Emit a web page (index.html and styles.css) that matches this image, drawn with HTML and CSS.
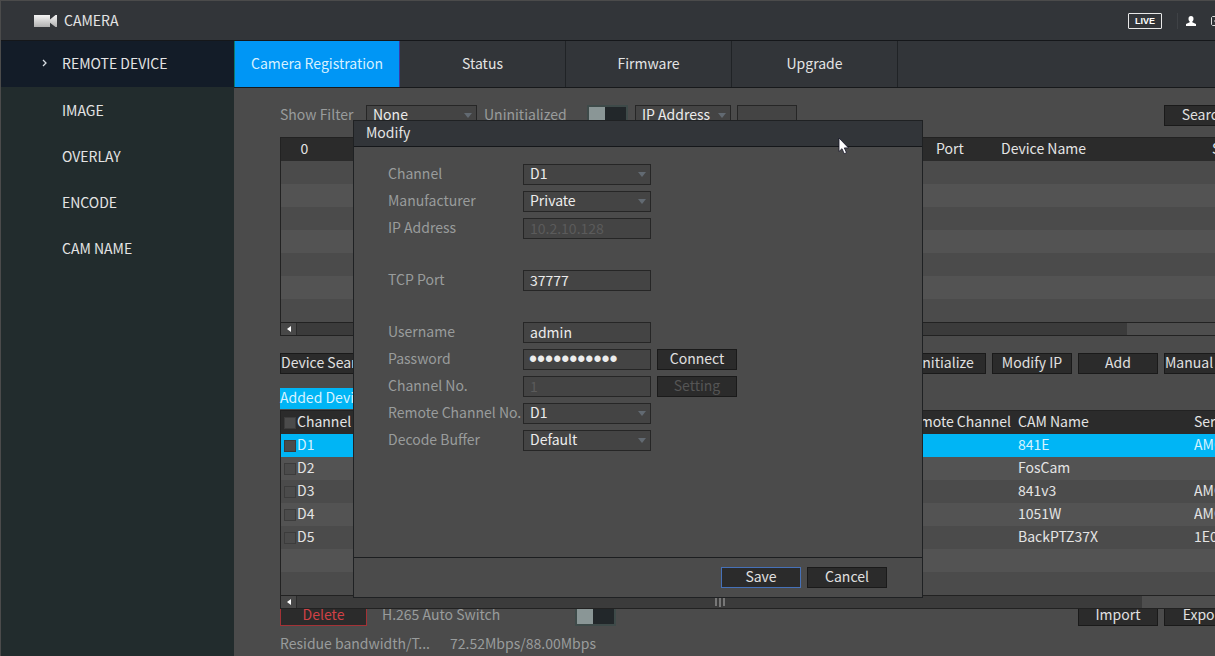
FILE: index.html
```html
<!DOCTYPE html>
<html lang="en">
<head>
<meta charset="utf-8">
<title>Camera - Remote Device</title>
<link rel="stylesheet" href="styles.css">
</head>
<body>
<div class="app">
  <header class="topbar">
    <svg class="camera-icon" viewBox="0 0 24 14" aria-hidden="true">
      <defs><linearGradient id="cam" x1="0" y1="0" x2="0" y2="1"><stop offset="0" stop-color="#f4f4f4"/><stop offset="1" stop-color="#b0b0b0"/></linearGradient></defs>
      <path fill="url(#cam)" d="M1 1h16v4.500L22.500 1H24v12h-1.500L17 8.800V13H1z"/>
    </svg>
    <h1 class="app-title">CAMERA</h1>
    <div class="top-actions">
      <button class="live" type="button">LIVE</button>
      <span class="divider"></span>
      <button class="icon-button" type="button" aria-label="User">
        <svg viewBox="0 0 10 10"><path fill="#fff" d="M5 0a2.500 2.700 0 0 1 2.500 2.700C7.500 4.100 7 5 6.300 5.500v.8L10 8v2H0V8l3.700-1.700v-.8C3 5 2.500 4.100 2.500 2.700A2.500 2.700 0 0 1 5 0z"/></svg>
      </button>
      <button class="icon-button" type="button" aria-label="Log out">
        <svg viewBox="0 0 10 10"><path fill="none" stroke="#ddd" d="M8 2.500V.500H1.500L.500 1.500v7l1 1H8v-2M3 5h6M7 3l2 2-2 2"/></svg>
      </button>
    </div>
  </header>

  <div class="body">
    <nav class="sidebar">
      <a class="side-item active" href="#remote"><svg class="chevron" viewBox="0 0 6 8" aria-hidden="true"><path fill="none" stroke="#d8dde2" stroke-width="1.300" d="M1 1l3 3-3 3"/></svg>REMOTE DEVICE</a>
      <a class="side-item" href="#image">IMAGE</a>
      <a class="side-item" href="#overlay">OVERLAY</a>
      <a class="side-item" href="#encode">ENCODE</a>
      <a class="side-item" href="#camname">CAM NAME</a>
    </nav>

    <main class="main">
      <nav class="tabs">
        <a class="tab active" href="#registration">Camera Registration</a>
        <a class="tab" href="#status">Status</a>
        <a class="tab" href="#firmware">Firmware</a>
        <a class="tab" href="#upgrade">Upgrade</a>
      </nav>

      <div class="content">
        <div class="filter-row">
          <label class="filter-label" for="filter">Show Filter</label>
          <span class="select filter-select"><select id="filter"><option>None</option></select></span>
          <label class="uninit-label" for="uninit">Uninitialized</label>
          <input class="toggle" type="checkbox" id="uninit">
          <span class="select address-select"><select aria-label="Search by"><option>IP Address</option></select></span>
          <input class="field search-field" type="text" aria-label="Search value">
          <button class="button push" type="button">Search</button>
        </div>

        <div class="grid-box">
          <table class="grid">
            <colgroup><col class="col-count"><col><col class="col-port"><col class="col-device"><col class="col-edge"></colgroup>
            <thead><tr><th class="center">0</th><th></th><th>Port</th><th>Device Name</th><th>S</th></tr></thead>
            <tbody>
              <tr><td colspan="5"></td></tr>
              <tr><td colspan="5"></td></tr>
              <tr><td colspan="5"></td></tr>
              <tr><td colspan="5"></td></tr>
              <tr><td colspan="5"></td></tr>
              <tr><td colspan="5"></td></tr>
              <tr><td colspan="5"></td></tr>
            </tbody>
          </table>
          <div class="scrollbar"><span class="arrow"></span><span class="thumb short"></span></div>
        </div>

        <div class="button-row">
          <button class="button wide" type="button">Device Search</button>
          <button class="button push" type="button">Initialize</button>
          <button class="button" type="button">Modify IP</button>
          <button class="button" type="button">Add</button>
          <button class="button tight" type="button">Manual Add</button>
        </div>

        <h2 class="added">Added Device</h2>
        <div class="grid-box">
          <table class="grid">
            <colgroup><col class="col-channel"><col><col class="col-remote"><col class="col-cam"><col class="col-serial"></colgroup>
            <thead><tr><th><label class="pick"><input type="checkbox">Channel</label></th><th></th><th class="remote">Remote Channel</th><th>CAM Name</th><th>Serial No.</th></tr></thead>
            <tbody>
              <tr class="selected"><td><label class="pick"><input type="checkbox">D1</label></td><td></td><td></td><td>841E</td><td>AMC0</td></tr>
              <tr><td><label class="pick"><input type="checkbox">D2</label></td><td></td><td></td><td>FosCam</td><td></td></tr>
              <tr><td><label class="pick"><input type="checkbox">D3</label></td><td></td><td></td><td>841v3</td><td>AMC0</td></tr>
              <tr><td><label class="pick"><input type="checkbox">D4</label></td><td></td><td></td><td>1051W</td><td>AMC0</td></tr>
              <tr><td><label class="pick"><input type="checkbox">D5</label></td><td></td><td></td><td>BackPTZ37X</td><td>1E0</td></tr>
              <tr><td colspan="5"></td></tr>
              <tr><td colspan="5"></td></tr>
            </tbody>
          </table>
          <div class="scrollbar"><span class="arrow"></span><span class="thumb"><i></i><i class="long"></i><i></i></span></div>
        </div>

        <div class="bottom-row">
          <button class="button delete" type="button">Delete</button>
          <label class="switch-label" for="h265">H.265 Auto Switch</label>
          <input class="toggle" type="checkbox" id="h265">
          <button class="button push" type="button">Import</button>
          <button class="button" type="button">Export</button>
        </div>
        <p class="bandwidth"><span class="bandwidth-name">Residue bandwidth/T...</span><span>72.52Mbps/88.00Mbps</span></p>
      </div>
    </main>
  </div>
</div>

<section class="dialog" role="dialog" aria-labelledby="dialog-title">
  <h2 class="dialog-title" id="dialog-title">Modify</h2>
  <form class="dialog-form" id="modify">
    <div class="group">
      <div class="row"><label for="channel">Channel</label><span class="select"><select id="channel"><option>D1</option></select></span></div>
      <div class="row"><label for="maker">Manufacturer</label><span class="select"><select id="maker"><option>Private</option></select></span></div>
      <div class="row"><label for="ip">IP Address</label><input class="field" id="ip" type="text" value="10.2.10.128" disabled></div>
    </div>
    <div class="group">
      <div class="row"><label for="port">TCP Port</label><input class="field" id="port" type="text" value="37777"></div>
    </div>
    <div class="group">
      <div class="row"><label for="user">Username</label><input class="field" id="user" type="text" value="admin"></div>
      <div class="row"><label for="pass">Password</label><input class="field password" id="pass" type="password" value="12345678901"><button class="button" type="button">Connect</button></div>
      <div class="row"><label for="number">Channel No.</label><input class="field" id="number" type="text" value="1" disabled><button class="button" type="button" disabled>Setting</button></div>
      <div class="row"><label for="remote-no">Remote Channel No.</label><span class="select"><select id="remote-no"><option>D1</option></select></span></div>
      <div class="row"><label for="buffer">Decode Buffer</label><span class="select"><select id="buffer"><option>Default</option></select></span></div>
    </div>
  </form>
  <div class="dialog-footer">
    <button class="button primary" type="submit" form="modify">Save</button>
    <button class="button" type="button">Cancel</button>
  </div>
</section>

<svg class="cursor" viewBox="0 0 11 18" aria-hidden="true"><path fill="#fff" stroke="#17172a" stroke-width=".8" d="M1 1v13.500l3-2.800 2.200 5 2.300-1-2.200-4.800H10.500z"/></svg>
</body>
</html>
```
FILE: styles.css
```css
* { box-sizing: border-box; }

body {
  margin: 0;
  overflow: hidden;
  background: #4b4b4b;
  color: #e4e4e4;
  font: 14px/20px "Noto Sans CJK SC", "Open Sans", sans-serif;
}

button, input, select { font: inherit; color: inherit; margin: 0; }
a { color: inherit; text-decoration: none; }
h1, h2, p { margin: 0; font-size: inherit; font-weight: 400; }

.app {
  display: flex;
  flex-direction: column;
  min-height: 100vh;
  border-top: 1px solid #4b4b4b;
  border-left: 1px solid #4b4b4b;
}

.topbar {
  display: flex;
  align-items: center;
  height: 40px;
  padding-left: 32px;
  background: #323539;
  border-bottom: 1px solid #15171a;
}
.camera-icon { width: 24px; height: 14px; margin-right: 7px; }
.app-title { padding-bottom: 2px; }
.top-actions { display: flex; align-items: center; margin-left: auto; margin-right: -6px; }
.live {
  width: 34px;
  height: 16px;
  padding: 0;
  background: none;
  border: 1px solid #e8e8e8;
  border-radius: 1px;
  color: #fff;
  font: bold 9px/12px "Liberation Sans", sans-serif;
}
.divider { width: 1px; height: 16px; margin: 0 8px 0 15px; background: #3f4246; }
.icon-button { padding: 0; width: 10px; height: 10px; margin-right: 15px; background: none; border: 0; }
.icon-button:last-child { margin-right: 0; }
.icon-button svg { display: block; width: 10px; height: 10px; }

.body { display: flex; flex: 1; }

.sidebar { flex: 0 0 233px; background: #222c2d; }
.side-item {
  display: flex;
  align-items: center;
  height: 46px;
  padding-left: 61px;
  position: relative;
}
.side-item.active { padding-bottom: 2px; background: #131c28; }
.chevron { position: absolute; left: 41px; width: 6px; height: 8px; }

.main { flex: 1; min-width: 0; }

.tabs { display: flex; height: 47px; background: #323539; border-bottom: 1px solid #17191b; }
.tab {
  display: flex;
  align-items: center;
  justify-content: center;
  width: 166px;
  padding-bottom: 2px;
  border-right: 1px solid #202326;
}
.tab.active { background: #0096f5; border-left: 1px solid #0a7a72; border-right-color: #3a3aa8; color: #d6f0ff; }

/* The working area is wider than the window and runs past its right edge. */
.content { margin-right: -29px; padding: 17px 0 0 46px; }

.filter-row, .button-row, .bottom-row { display: flex; align-items: center; height: 21px; }
.filter-row { color: #999c9c; }
.filter-row label, .bottom-row label { padding-bottom: 3px; }
.filter-label { width: 86px; }
.filter-select { width: 111px; margin-right: 7px; }
.uninit-label { width: 103px; }
.address-select { width: 96px; margin: 0 6px 0 7px; }

.select { position: relative; display: block; height: 21px; }
.select::after {
  content: "";
  position: absolute;
  right: 5px;
  top: 8px;
  border: 4px solid transparent;
  border-top: 5px solid #626a72;
  border-bottom: 0;
  pointer-events: none;
}
.select select, .field {
  display: block;
  width: 100%;
  height: 21px;
  padding: 0 6px 2px;
  background: #444;
  border: 1px solid #262626;
  border-radius: 0;
  color: #ececec;
  line-height: 17px;
  appearance: none;
  outline: 0;
}
.field:disabled { color: #5b5b5b; }
.field.search-field { width: 60px; }

.toggle {
  appearance: none;
  width: 41px;
  height: 21px;
  border: 2px solid #3e4a49;
  background: linear-gradient(to right, #8a9696 16px, #22272a 16px);
}

.button {
  flex: none;
  width: 80px;
  height: 21px;
  padding: 0 0 2px;
  background: #2b2b2b;
  border: 1px solid #1a1a1a;
  color: #e0e0e0;
  line-height: 17px;
  white-space: nowrap;
  overflow: hidden;
}
.button:disabled { color: #555; }
.button.tight { text-align: left; }
.button.wide { width: 92px; }
.button.push { margin-left: auto; }
.button.primary { border-color: #4671b8; }
.button.delete { width: 87px; border-color: #a33236; color: #d04146; }
.button-row, .bottom-row { gap: 6px; }

.grid-box {
  position: relative;
  border: 1px solid #222;
  border-width: 1px 0 1px 1px;
}
.filter-row + .grid-box { margin: 11px 0 17px; }
.grid { width: 100%; table-layout: fixed; border-collapse: collapse; }
.grid th, .grid td {
  height: 23px;
  padding: 0 0 3px;
  overflow: hidden;
  font-weight: 400;
  line-height: 20px;
  text-align: left;
  white-space: nowrap;
}
.grid thead { background: #2b2b2b; }
.grid tbody tr:nth-child(even) { background: #535353; }
.grid .selected { background: #00b5f5; color: #d6f3ff; }
.grid .center { text-align: center; }
.grid .remote { padding-right: 7px; text-align: right; }
.col-count { width: 47px; }
.col-port { width: 65px; }
.col-device { width: 211px; }
.col-edge { width: 32px; }
.col-channel { width: 120px; }
.col-remote { width: 120px; }
.col-cam { width: 176px; }
.col-serial { width: 50px; }

.pick { display: flex; align-items: flex-end; gap: 1px; padding-left: 3px; }
.pick input { appearance: none; width: 12px; height: 12px; margin-bottom: 2px; background: #4b4b4b; border: 1px solid #3c3c3c; }

.scrollbar { display: flex; height: 13px; background: #4e4e4e; border-top: 1px solid #222; }
.arrow { display: flex; align-items: center; justify-content: center; width: 16px; background: #484848; border-right: 1px solid #2b2b2b; }
.arrow::after { content: ""; border: 3px solid transparent; border-right: 4px solid #fff; border-left: 0; }
.thumb { display: flex; justify-content: center; align-items: flex-start; gap: 2px; flex: 1; margin-right: 102px; background: #3b3b3b; }
.thumb.short { margin-right: 117px; }
.thumb i { width: 2px; height: 10px; background: #777; }
.thumb .long { height: 11px; }

.added { width: 92px; height: 21px; margin: 14px 0 1px; background: #00b5f5; color: #d6f3ff; line-height: 18px; white-space: nowrap; }

/* The grid's scrollbar lies over the top edge of this row. */
.bottom-row { margin-top: -4px; }
.bottom-row .switch-label { width: 187px; margin-left: 9px; color: #999c9c; }
.bandwidth { display: flex; margin-top: 7px; color: #999c9c; }
.bandwidth-name { width: 170px; }

.dialog {
  position: absolute;
  left: 353px;
  top: 120px;
  width: 570px;
  background: #4b4b4b;
  border: 1px solid #1f2123;
}
.dialog-title { height: 26px; padding: 1px 12px; background: #323539; border-bottom: 1px solid #15171a; }
.dialog-form { display: flex; flex-direction: column; gap: 31px; padding: 16px 34px 107px; }
.group { display: flex; flex-direction: column; gap: 6px; }
.row {
  display: grid;
  grid-template-columns: 129px 128px 80px;
  column-gap: 6px;
  align-items: center;
  height: 21px;
  color: #999c9c;
}
.row label { padding-bottom: 3px; white-space: nowrap; }
.field.password { padding: 0 5px; font: 23px/19px "Liberation Sans", sans-serif; }
.dialog-footer { display: flex; justify-content: flex-end; gap: 6px; padding: 9px 35px; border-top: 1px solid #1c1e20; }

.cursor { position: absolute; left: 838px; top: 137px; width: 11px; height: 18px; }
```
